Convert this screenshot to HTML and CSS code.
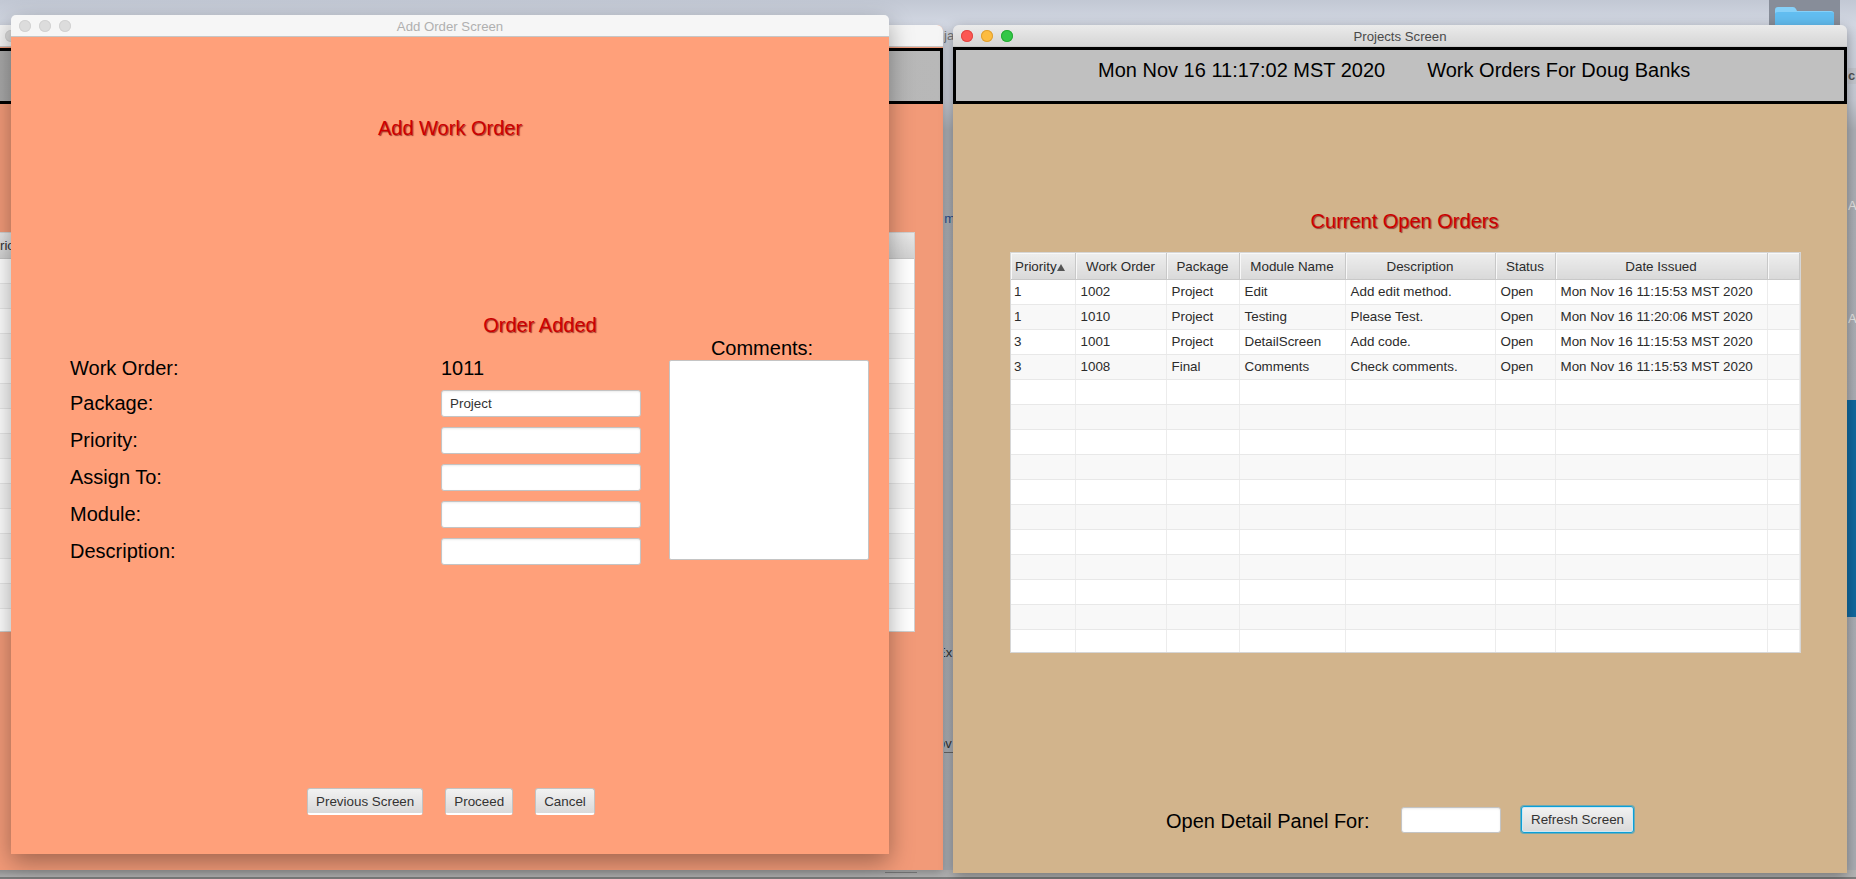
FILE: index.html
```html
<!DOCTYPE html>
<html lang="en">
<head>
    <meta charset="UTF-8">
    <title>Add Order Screen</title>
    <link rel="stylesheet" href="styles.css">
</head>
<body>
    <!-- desktop bits showing around the windows -->
    <div class="folder-tile">
        <svg class="folder-icon" viewBox="0 0 59 18" width="59" height="18">
            <path d="M0 18V3q0-3 3-3h15q2 0 3 2l1 2h34q3 0 3 3v11z" fill="#86d0f8"/>
            <path d="M0 18V7q0-2 3-2h53q3 0 3 2v11z" fill="#62bdf0"/>
        </svg>
    </div>
    <div class="desk-label desk-label-ac">c</div>
    <div class="desk-label desk-label-am1">AM</div>
    <div class="desk-label desk-label-am2">AM</div>
    <div class="desk-blue"></div>
    <div class="desk-dock"></div>
    <div class="desk-mark"></div>
    <div class="strip-text strip-ja">ja</div>
    <div class="strip-text strip-om">om</div>
    <div class="strip-text strip-ex">Ex</div>
    <div class="strip-text strip-ov">ov</div>

    <!-- window behind -->
    <div class="window back-window">
        <div class="titlebar titlebar-back">
            <span class="light light-off"></span>
        </div>
        <div class="back-header"></div>
        <div class="back-table">
            <div class="back-table-head">Priority</div>
            <div class="back-row"></div>
            <div class="back-row alt"></div>
            <div class="back-row"></div>
            <div class="back-row alt"></div>
            <div class="back-row"></div>
            <div class="back-row alt"></div>
            <div class="back-row"></div>
            <div class="back-row alt"></div>
            <div class="back-row"></div>
            <div class="back-row alt"></div>
            <div class="back-row"></div>
            <div class="back-row alt"></div>
            <div class="back-row"></div>
            <div class="back-row alt"></div>
            <div class="back-row back-row-last"></div>
        </div>
    </div>

    <!-- add order window -->
    <div class="window add-window">
        <div class="titlebar titlebar-add">
            <div class="lights">
                <span class="light light-off"></span>
                <span class="light light-off"></span>
                <span class="light light-off"></span>
            </div>
            <span class="title-text title-dim">Add Order Screen</span>
        </div>
        <div class="add-body">
            <h2 class="red-title add-title">Add Work Order</h2>
            <div class="order-status red-title">Order Added</div>
            <div class="form-area">
                <div class="form-grid">
                    <label class="form-label first-row">Work Order:</label>
                    <div class="form-label first-row">1011</div>
                    <label class="form-label">Package:</label>
                    <input class="fx-input" type="text" value="Project">
                    <label class="form-label">Priority:</label>
                    <input class="fx-input" type="text">
                    <label class="form-label">Assign To:</label>
                    <input class="fx-input" type="text">
                    <label class="form-label">Module:</label>
                    <input class="fx-input" type="text">
                    <label class="form-label">Description:</label>
                    <input class="fx-input" type="text">
                </div>
                <div class="comments">
                    <div class="comments-label">Comments:</div>
                    <textarea class="comments-box"></textarea>
                </div>
            </div>
            <div class="add-buttons">
                <button class="fx-button">Previous Screen</button>
                <button class="fx-button">Proceed</button>
                <button class="fx-button">Cancel</button>
            </div>
        </div>
    </div>

    <!-- projects window -->
    <div class="window projects-window">
        <div class="titlebar titlebar-projects">
            <div class="lights">
                <span class="light light-red"></span>
                <span class="light light-yellow"></span>
                <span class="light light-green"></span>
            </div>
            <span class="title-text">Projects Screen</span>
        </div>
        <div class="projects-header">
            <span>Mon Nov 16 11:17:02 MST 2020</span>
            <span>Work Orders For Doug Banks</span>
        </div>
        <div class="projects-body">
            <h2 class="red-title orders-title">Current Open Orders</h2>
            <table class="orders-table">
                <colgroup>
                    <col class="col-priority"><col class="col-order"><col class="col-package"><col class="col-module">
                    <col class="col-desc"><col class="col-status"><col class="col-date"><col class="col-extra">
                </colgroup>
                <thead>
                    <tr>
                        <th class="th-priority">Priority<span class="sort-arrow"></span></th>
                        <th>Work Order</th>
                        <th>Package</th>
                        <th>Module Name</th>
                        <th>Description</th>
                        <th>Status</th>
                        <th>Date Issued</th>
                        <th></th>
                    </tr>
                </thead>
                <tbody>
                    <tr><td>1</td><td>1002</td><td>Project</td><td>Edit</td><td>Add edit method.</td><td>Open</td><td>Mon Nov 16 11:15:53 MST 2020</td><td></td></tr>
                    <tr><td>1</td><td>1010</td><td>Project</td><td>Testing</td><td>Please Test.</td><td>Open</td><td>Mon Nov 16 11:20:06 MST 2020</td><td></td></tr>
                    <tr><td>3</td><td>1001</td><td>Project</td><td>DetailScreen</td><td>Add code.</td><td>Open</td><td>Mon Nov 16 11:15:53 MST 2020</td><td></td></tr>
                    <tr><td>3</td><td>1008</td><td>Final</td><td>Comments</td><td>Check comments.</td><td>Open</td><td>Mon Nov 16 11:15:53 MST 2020</td><td></td></tr>
                    <tr><td></td><td></td><td></td><td></td><td></td><td></td><td></td><td></td></tr>
                    <tr><td></td><td></td><td></td><td></td><td></td><td></td><td></td><td></td></tr>
                    <tr><td></td><td></td><td></td><td></td><td></td><td></td><td></td><td></td></tr>
                    <tr><td></td><td></td><td></td><td></td><td></td><td></td><td></td><td></td></tr>
                    <tr><td></td><td></td><td></td><td></td><td></td><td></td><td></td><td></td></tr>
                    <tr><td></td><td></td><td></td><td></td><td></td><td></td><td></td><td></td></tr>
                    <tr><td></td><td></td><td></td><td></td><td></td><td></td><td></td><td></td></tr>
                    <tr><td></td><td></td><td></td><td></td><td></td><td></td><td></td><td></td></tr>
                    <tr><td></td><td></td><td></td><td></td><td></td><td></td><td></td><td></td></tr>
                    <tr><td></td><td></td><td></td><td></td><td></td><td></td><td></td><td></td></tr>
                    <tr class="last-row"><td></td><td></td><td></td><td></td><td></td><td></td><td></td><td></td></tr>
                </tbody>
            </table>
            <div class="detail-row">
                <span class="detail-label">Open Detail Panel For:</span>
                <input class="fx-input detail-input" type="text">
                <button class="fx-button focused">Refresh Screen</button>
            </div>
        </div>
    </div>
</body>
</html>
```

FILE: styles.css
```css
html, body {
    margin: 0;
    padding: 0;
    height: 100%;
    overflow: hidden;
}
body {
    position: relative;
    width: 1856px;
    height: 879px;
    font-family: "Liberation Sans", Arial, sans-serif;
    background: linear-gradient(to bottom, #c2c8d4 0, #d3d8e3 25px, #c8ccd6 100px, #adb0b6 130px, #abaeb4 100%);
}

/* desktop */
.folder-tile {
    position: absolute;
    left: 1769px;
    top: 0;
    width: 71px;
    height: 25px;
    background-color: #878d99;
    display: flex;
    justify-content: center;
    align-items: flex-end;
}
.folder-icon {
    display: block;
}
.desk-label {
    position: absolute;
    left: 1848px;
    width: 8px;
    height: 16px;
    overflow: hidden;
    font-size: 13px;
    line-height: 16px;
}
.desk-label-ac {
    top: 68px;
    font-weight: bold;
    color: #555;
    background-color: #c5c8cf;
}
.desk-label-am1 {
    top: 198px;
    color: #e6e6e6;
}
.desk-label-am2 {
    top: 311px;
    color: #e6e6e6;
}
.desk-blue {
    position: absolute;
    left: 1847px;
    top: 400px;
    width: 9px;
    height: 217px;
    background-color: #11699f;
}
.desk-dock {
    position: absolute;
    left: 0;
    right: 0;
    top: 870px;
    height: 7px;
    background-color: #b5b5b5;
    border-bottom: 2px solid #7f7f7f;
}
.desk-mark {
    position: absolute;
    left: 885px;
    top: 872px;
    width: 32px;
    height: 1px;
    background-color: #858585;
}
.strip-text {
    position: absolute;
    left: 944px;
    width: 9px;
    height: 16px;
    overflow: hidden;
    font-size: 13px;
    line-height: 16px;
    color: #333;
    white-space: nowrap;
}
.strip-ja {
    top: 28px;
    color: #777;
}
.strip-om {
    top: 211px;
    color: #2a4f8f;
    text-indent: -7px;
}
.strip-ex {
    top: 645px;
    text-indent: -7px;
}
.strip-ov {
    top: 736px;
    border-bottom: 1px solid #666;
    text-indent: -6px;
}

/* windows */
.window {
    position: absolute;
    overflow: hidden;
}
.back-window {
    left: -10px;
    top: 25px;
    width: 953px;
    height: 845px;
    background-color: #f29a78;
    border-radius: 6px 6px 0 0;
    box-shadow: 0 4px 10px rgba(0, 0, 0, 0.25);
}
.add-window {
    left: 11px;
    top: 15px;
    width: 878px;
    height: 839px;
    border-radius: 5px 5px 0 0;
    box-shadow: 0 8px 24px rgba(0, 0, 0, 0.35);
}
.projects-window {
    left: 953px;
    top: 25px;
    width: 894px;
    height: 848px;
    border-radius: 6px 6px 0 0;
    box-shadow: 0 4px 14px rgba(0, 0, 0, 0.35);
}

.titlebar {
    position: relative;
    height: 22px;
    padding-top: 1px;
    display: flex;
    align-items: center;
    justify-content: center;
    box-sizing: border-box;
    border-bottom: 1px solid #c6c6c6;
}
.titlebar-back {
    background-color: #f5f5f5;
    justify-content: flex-start;
    padding-left: 15px;
}
.titlebar-add {
    background-color: #f6f6f6;
}
.titlebar-projects {
    background: linear-gradient(to bottom, #ebebeb, #d5d5d5);
}
.lights {
    position: absolute;
    left: 8px;
    top: 5px;
    display: flex;
    gap: 8px;
}
.light {
    display: block;
    width: 12px;
    height: 12px;
    border-radius: 50%;
}
.light-off {
    background-color: #dcdcdc;
    box-shadow: inset 0 0 0 1px #d2d2d2;
}
.light-red {
    background-color: #fc5753;
    box-shadow: inset 0 0 0 1px #df4744;
}
.light-yellow {
    background-color: #fdbc40;
    box-shadow: inset 0 0 0 1px #de9f34;
}
.light-green {
    background-color: #33c748;
    box-shadow: inset 0 0 0 1px #27aa35;
}
.title-text {
    font-size: 13.2px;
    color: #4a4a4a;
}
.title-dim {
    color: #b0b0b0;
}

/* back window contents */
.back-header {
    height: 56px;
    box-sizing: border-box;
    border: 3px solid #000;
    background: linear-gradient(to right, #a8a8a8, #b8b8b8);
    margin-top: 1px;
}
.back-table {
    margin: 128px 28px 0 0;
    background-color: #fff;
    border: 1px solid #d0d0d0;
}
.back-table-head {
    height: 25px;
    background: linear-gradient(to bottom, #e8e8e8, #d2d2d2);
    border-bottom: 1px solid #c6c6c6;
    font-size: 13.4px;
    line-height: 26px;
    color: #333;
}
.back-row {
    height: 25px;
    box-sizing: border-box;
    border-bottom: 1px solid #e8e8e8;
}
.back-row.alt {
    background-color: #f7f7f7;
}
.back-row-last {
    height: 22px;
    border-bottom: none;
}

/* add order window contents */
.add-body {
    height: 817px;
    box-sizing: border-box;
    background-color: #ffa07a;
    display: flex;
    flex-direction: column;
}
.red-title {
    margin: 0;
    font-size: 20px;
    line-height: 23px;
    font-weight: normal;
    color: #cc0000;
    text-align: center;
    text-shadow: 1px 1px 1px rgba(110, 0, 0, 0.65);
}
.add-title {
    margin-top: 80px;
}
.order-status {
    margin-top: 174px;
    width: 398px;
    margin-left: 330px;
}
.form-area {
    display: flex;
    padding-left: 59px;
}
.form-grid {
    display: grid;
    grid-template-columns: 371px 200px;
    grid-auto-rows: 27px;
    row-gap: 10px;
    align-items: center;
    margin-top: 16px;
}
.form-label {
    font-size: 20px;
    color: #000;
}
.first-row {
    padding-top: 3px;
}
.fx-input {
    box-sizing: border-box;
    height: 27px;
    width: 200px;
    margin: 0;
    padding: 0 8px;
    border: 1px solid #c4c4c4;
    border-radius: 3px;
    background-color: #fff;
    box-shadow: inset 0 1px 2px rgba(0, 0, 0, 0.08);
    font-family: "Liberation Sans", Arial, sans-serif;
    font-size: 13.4px;
    color: #333;
    outline: none;
}
.comments {
    margin-left: 28px;
    width: 200px;
}
.comments-label {
    font-size: 20px;
    line-height: 23px;
    text-align: center;
    width: 186px;
    color: #000;
}
.comments-box {
    display: block;
    box-sizing: border-box;
    width: 200px;
    height: 200px;
    margin: 0;
    border: 1px solid #c4c4c4;
    border-radius: 2px;
    background-color: #fff;
    resize: none;
    outline: none;
}
.add-buttons {
    display: flex;
    gap: 22px;
    margin-top: 223px;
    padding-left: 296px;
}
.fx-button {
    box-sizing: border-box;
    height: 27px;
    padding: 0 8px;
    margin: 0;
    border: 1px solid #c2c2c2;
    border-bottom: 2px solid #fff;
    border-radius: 3px;
    background: linear-gradient(to bottom, #f2f2f2, #d9d9d9);
    font-family: "Liberation Sans", Arial, sans-serif;
    font-size: 13.4px;
    color: #333;
}
.fx-button.focused {
    padding: 0 9px;
    border: 1px solid #0a9fd8;
    box-shadow: 0 0 0 1px rgba(10, 159, 216, 0.5), inset 0 0 0 1px #cfe9f4;
}

/* projects window contents */
.projects-header {
    height: 57px;
    box-sizing: border-box;
    border: 3px solid #000;
    background-color: #c0c0c0;
    display: flex;
    gap: 42px;
    padding-left: 142px;
    padding-top: 9px;
    font-size: 20px;
    line-height: 23px;
    color: #000;
}
.projects-body {
    height: 769px;
    box-sizing: border-box;
    background-color: #d2b48c;
}
.orders-title {
    padding-top: 106px;
    padding-left: 9px;
}
.orders-table {
    table-layout: fixed;
    border-collapse: collapse;
    width: 788px;
    margin: 20px 0 0 58px;
    background-color: #fff;
    font-size: 13.4px;
    color: #2b2b2b;
    outline: 1px solid #d6d6d6;
}
.col-priority { width: 64px; }
.col-order { width: 91px; }
.col-package { width: 73px; }
.col-module { width: 106px; }
.col-desc { width: 150px; }
.col-status { width: 60px; }
.col-date { width: 212px; }
.col-extra { width: 32px; }
.orders-table th {
    height: 26px;
    padding: 2px 0 0;
    box-sizing: border-box;
    font-weight: normal;
    background: linear-gradient(to bottom, #eeeeee, #d9d9d9);
    border-right: 1px solid #c8c8c8;
    border-bottom: 1px solid #c8c8c8;
    box-shadow: inset 1px 1px 0 #f8f8f8;
}
.orders-table th.th-priority {
    text-align: left;
    padding-left: 4px;
    white-space: nowrap;
}
.sort-arrow {
    display: inline-block;
    width: 0;
    height: 0;
    border-left: 4px solid transparent;
    border-right: 4px solid transparent;
    border-bottom: 7px solid #555;
}
.orders-table td {
    height: 25px;
    padding: 0 5px;
    box-sizing: border-box;
    border-right: 1px solid #ececec;
    border-bottom: 1px solid #e8e8e8;
    white-space: nowrap;
    overflow: hidden;
}
.orders-table td:first-child {
    padding-left: 3px;
}
.orders-table tbody tr:nth-child(even) td {
    background-color: #f8f8f8;
}
.orders-table tr.last-row td {
    height: 23px;
    border-bottom: none;
}
.detail-row {
    display: flex;
    align-items: center;
    margin-top: 154px;
    padding-left: 213px;
}
.detail-label {
    font-size: 20px;
    width: 235px;
    margin-top: 4px;
    color: #000;
}
.detail-input {
    width: 100px;
    height: 26px;
}
.detail-row .fx-button {
    margin-left: 20px;
}
```
